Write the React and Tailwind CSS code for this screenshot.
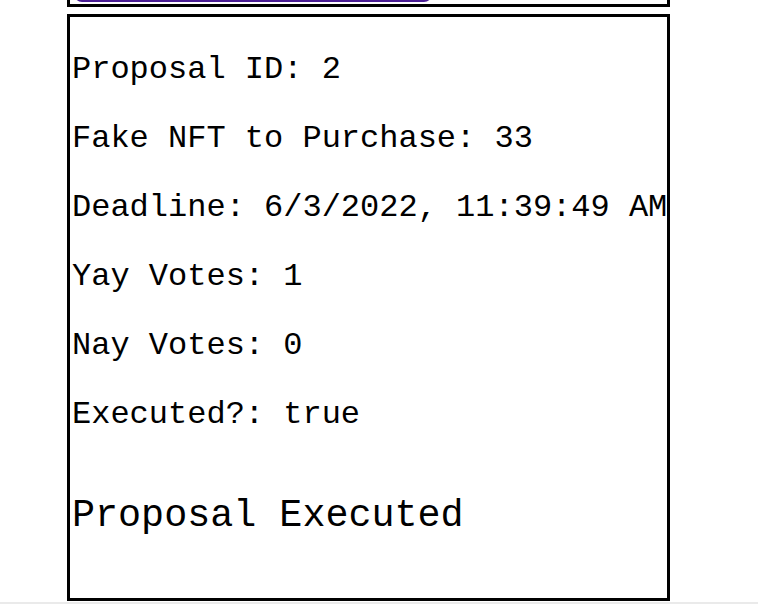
import React from 'react';

const proposal = {
    id: 2,
    nftTokenId: 33,
    deadline: '6/3/2022, 11:39:49 AM',
    yayVotes: 1,
    nayVotes: 0,
    executed: true,
};

const App = () => {
    const rows = [
        `Proposal ID: ${proposal.id}`,
        `Fake NFT to Purchase: ${proposal.nftTokenId}`,
        `Deadline: ${proposal.deadline}`,
        `Yay Votes: ${proposal.yayVotes}`,
        `Nay Votes: ${proposal.nayVotes}`,
        `Executed?: ${proposal.executed.toString()}`,
    ];

    return (
        <div className="min-h-[612px] bg-white overflow-hidden font-['Courier_New','Courier','Nimbus_Mono_PS','FreeMono','Liberation_Mono',monospace] text-black">

            {/* Previous card, scrolled mostly out of view */}
            <div className="ml-[67px] w-[603px] h-[47px] -mt-[40px] border-[3px] border-black flex items-end pl-[4px] pb-[2px]">
                <div className="w-[358px] h-[30px] rounded-b-lg bg-[#4a1d94]" />
            </div>

            {/* Proposal card */}
            <div className="ml-[67px] mt-[7px] w-[603px] border-[3px] border-black pl-[2px]">
                {rows.map((row, i) => (
                    <p
                        key={i}
                        className={`text-[32px] leading-[37px] whitespace-nowrap ${i === 0 ? 'mt-[34px]' : 'mt-[32px]'}`}
                    >
                        {row}
                    </p>
                ))}
                <div className="mt-[62px] mb-[59px] text-[38.4px] leading-[43.5px] whitespace-nowrap">
                    Proposal Executed
                </div>
            </div>

            {/* Footer rule */}
            <div className="mt-[1px] border-t-2 border-[#eaeaea]" />
        </div>
    );
};

export default App;
